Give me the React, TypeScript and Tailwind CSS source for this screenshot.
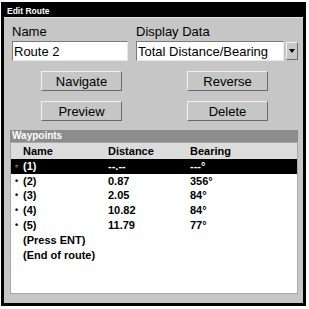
import React from 'react';

type Waypoint = { name: string; distance: string; bearing: string; marker: string; active?: boolean };

const waypoints: Waypoint[] = [
    { name: '(1)', distance: '--.--', bearing: '---°', marker: '◦', active: true },
    { name: '(2)', distance: '0.87', bearing: '356°', marker: '•' },
    { name: '(3)', distance: '2.05', bearing: '84°', marker: '•' },
    { name: '(4)', distance: '10.82', bearing: '84°', marker: '•' },
    { name: '(5)', distance: '11.79', bearing: '77°', marker: '•' },
];

const font = { fontFamily: '"Liberation Sans", Arial, sans-serif' };

function RaisedButton({ label }: { label: string }) {
    return (
        <div className="flex h-[20px] w-[81px] items-center justify-center border border-t-[#f0f0f0] border-l-[#f0f0f0] border-b-[#6a6a6a] border-r-[#6a6a6a] bg-[#c6c6c6] text-[13px] leading-none text-black">
            {label}
        </div>
    );
}

export default function App() {
    return (
        <div className="h-[309px] w-[309px] bg-white pl-[1px] pt-[2px]" style={font}>
            <div className="flex h-[304px] w-[305px] flex-col border-[3px] border-black bg-[#c6c6c6]">
                {/* Title bar */}
                <div className="flex h-[12px] items-center bg-black pl-[3px] text-[8.5px] font-bold leading-none text-white">
                    Edit Route
                </div>
                <div className="h-px bg-[#e4e4e4]" />

                {/* Name / Display Data */}
                <div className="mt-[6px] flex pl-[8px] pr-[4px]">
                    <div className="flex w-[116px] flex-col">
                        <span className="h-[15px] text-[13px] leading-[15px] text-black">Name</span>
                        <div className="mt-[2px] flex h-[20px] items-center border border-t-[#7a7a7a] border-l-[#7a7a7a] border-b-[#e8e8e8] border-r-[#e8e8e8] bg-white pl-[1px] text-[13px] leading-none text-black">
                            Route 2
                        </div>
                    </div>
                    <div className="ml-[8px] flex flex-1 flex-col">
                        <span className="h-[15px] text-[13px] leading-[15px] text-black">Display Data</span>
                        <div className="mt-[2px] flex h-[20px] items-center">
                            <div className="flex h-full w-[148px] items-center border border-t-[#7a7a7a] border-l-[#7a7a7a] border-b-[#e8e8e8] border-r-[#e8e8e8] bg-white pl-[1px] text-[13px] leading-none text-black">
                                Total Distance/Bearing
                            </div>
                            <div className="ml-[2px] flex h-[18px] w-[12px] items-center justify-center border border-t-[#f0f0f0] border-l-[#f0f0f0] border-b-[#6a6a6a] border-r-[#6a6a6a] bg-[#c6c6c6]">
                                <svg width="6" height="4" viewBox="0 0 6 4">
                                    <path d="M0 0h6L3 4z" fill="#000" />
                                </svg>
                            </div>
                        </div>
                    </div>
                </div>

                {/* Action buttons */}
                <div className="mt-[10px] grid grid-cols-[81px_81px] gap-x-[65px] gap-y-[10px] pl-[37px]">
                    <RaisedButton label="Navigate" />
                    <RaisedButton label="Reverse" />
                    <RaisedButton label="Preview" />
                    <RaisedButton label="Delete" />
                </div>

                {/* Waypoints list */}
                <div className="ml-[6px] mr-[5px] mt-[9px] flex flex-1 flex-col">
                    <div className="flex h-[12px] items-center bg-[#8c8c8c] pl-[2px] text-[10px] font-bold leading-none text-white">
                        Waypoints
                    </div>
                    <div className="mb-[9px] flex flex-1 flex-col border border-[#a8a8a8] bg-white text-[11px] font-bold leading-none text-black">
                        <div className="flex h-[16px] items-center bg-[#dcdcdc]">
                            <span className="w-[97px] pl-[12px]">Name</span>
                            <span className="w-[82px]">Distance</span>
                            <span>Bearing</span>
                        </div>
                        {waypoints.map((w) => (
                            <div
                                key={w.name}
                                className={`flex h-[14.8px] items-center ${w.active ? 'bg-black text-white' : ''}`}
                            >
                                <span className="w-[12px] pl-[4px] text-[9px]">{w.marker}</span>
                                <span className="w-[85px]">{w.name}</span>
                                <span className="w-[82px]">{w.distance}</span>
                                <span>{w.bearing}</span>
                            </div>
                        ))}
                        <div className="flex h-[14.8px] items-center pl-[12px]">(Press ENT)</div>
                        <div className="flex h-[14.8px] items-center pl-[12px]">(End of route)</div>
                    </div>
                </div>
            </div>
        </div>
    );
}
